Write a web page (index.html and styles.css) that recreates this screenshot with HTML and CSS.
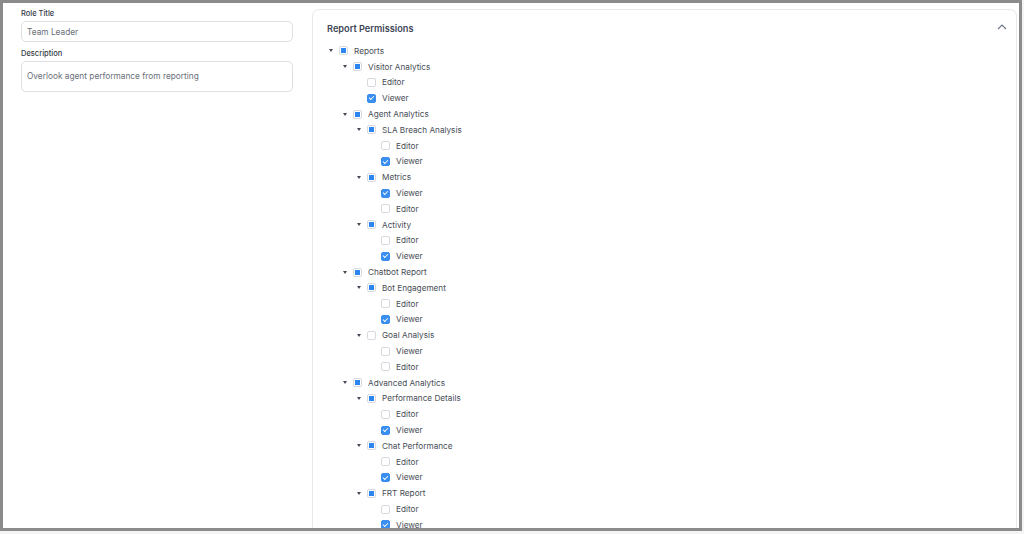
FILE: index.html
```html
<!DOCTYPE html>
<html lang="en">
<head>
    <meta charset="UTF-8">
    <title>Role Permissions</title>
    <link rel="stylesheet" href="styles.css">
</head>
<body>
    <div class="frame">
        <div class="roleForm">
            <label class="fieldLabel">Role Title</label>
            <div class="textInput">Team Leader</div>
            <label class="fieldLabel">Description</label>
            <div class="textInput textArea">Overlook agent performance from reporting</div>
        </div>

        <div class="permCard">
            <div class="permHeader">
                <span class="permTitle">Report Permissions</span>
                <svg class="chevron" width="10" height="6" viewBox="0 0 10 6"><path d="M1 5 L5 1 L9 5" fill="none" stroke="#6b7785" stroke-width="1.1"/></svg>
            </div>

            <ul class="tree">
                <li>
                    <div class="row"><span class="caret"></span><span class="box part"></span><span class="name">Reports</span></div>
                    <ul>
                        <li>
                            <div class="row"><span class="caret"></span><span class="box part"></span><span class="name">Visitor Analytics</span></div>
                            <ul>
                                <li><div class="row"><span class="slot"></span><span class="box"></span><span class="name">Editor</span></div></li>
                                <li><div class="row"><span class="slot"></span><span class="box on"></span><span class="name">Viewer</span></div></li>
                            </ul>
                        </li>
                        <li>
                            <div class="row"><span class="caret"></span><span class="box part"></span><span class="name">Agent Analytics</span></div>
                            <ul>
                                <li>
                                    <div class="row"><span class="caret"></span><span class="box part"></span><span class="name">SLA Breach Analysis</span></div>
                                    <ul>
                                        <li><div class="row"><span class="slot"></span><span class="box"></span><span class="name">Editor</span></div></li>
                                        <li><div class="row"><span class="slot"></span><span class="box on"></span><span class="name">Viewer</span></div></li>
                                    </ul>
                                </li>
                                <li>
                                    <div class="row"><span class="caret"></span><span class="box part"></span><span class="name">Metrics</span></div>
                                    <ul>
                                        <li><div class="row"><span class="slot"></span><span class="box on"></span><span class="name">Viewer</span></div></li>
                                        <li><div class="row"><span class="slot"></span><span class="box"></span><span class="name">Editor</span></div></li>
                                    </ul>
                                </li>
                                <li>
                                    <div class="row"><span class="caret"></span><span class="box part"></span><span class="name">Activity</span></div>
                                    <ul>
                                        <li><div class="row"><span class="slot"></span><span class="box"></span><span class="name">Editor</span></div></li>
                                        <li><div class="row"><span class="slot"></span><span class="box on"></span><span class="name">Viewer</span></div></li>
                                    </ul>
                                </li>
                            </ul>
                        </li>
                        <li>
                            <div class="row"><span class="caret"></span><span class="box part"></span><span class="name">Chatbot Report</span></div>
                            <ul>
                                <li>
                                    <div class="row"><span class="caret"></span><span class="box part"></span><span class="name">Bot Engagement</span></div>
                                    <ul>
                                        <li><div class="row"><span class="slot"></span><span class="box"></span><span class="name">Editor</span></div></li>
                                        <li><div class="row"><span class="slot"></span><span class="box on"></span><span class="name">Viewer</span></div></li>
                                    </ul>
                                </li>
                                <li>
                                    <div class="row"><span class="caret"></span><span class="box"></span><span class="name">Goal Analysis</span></div>
                                    <ul>
                                        <li><div class="row"><span class="slot"></span><span class="box"></span><span class="name">Viewer</span></div></li>
                                        <li><div class="row"><span class="slot"></span><span class="box"></span><span class="name">Editor</span></div></li>
                                    </ul>
                                </li>
                            </ul>
                        </li>
                        <li>
                            <div class="row"><span class="caret"></span><span class="box part"></span><span class="name">Advanced Analytics</span></div>
                            <ul>
                                <li>
                                    <div class="row"><span class="caret"></span><span class="box part"></span><span class="name">Performance Details</span></div>
                                    <ul>
                                        <li><div class="row"><span class="slot"></span><span class="box"></span><span class="name">Editor</span></div></li>
                                        <li><div class="row"><span class="slot"></span><span class="box on"></span><span class="name">Viewer</span></div></li>
                                    </ul>
                                </li>
                                <li>
                                    <div class="row"><span class="caret"></span><span class="box part"></span><span class="name">Chat Performance</span></div>
                                    <ul>
                                        <li><div class="row"><span class="slot"></span><span class="box"></span><span class="name">Editor</span></div></li>
                                        <li><div class="row"><span class="slot"></span><span class="box on"></span><span class="name">Viewer</span></div></li>
                                    </ul>
                                </li>
                                <li>
                                    <div class="row"><span class="caret"></span><span class="box part"></span><span class="name">FRT Report</span></div>
                                    <ul>
                                        <li><div class="row"><span class="slot"></span><span class="box"></span><span class="name">Editor</span></div></li>
                                        <li><div class="row"><span class="slot"></span><span class="box on"></span><span class="name">Viewer</span></div></li>
                                    </ul>
                                </li>
                            </ul>
                        </li>
                    </ul>
                </li>
            </ul>
        </div>
    </div>
</body>
</html>
```

FILE: styles.css
```css
body {
    margin: 0;
    background-color: #f4f4f4;
    font-family: Inter, "Noto Sans", sans-serif;
}

.frame {
    box-sizing: border-box;
    width: 1022px;
    height: 531px;
    border: 3px solid #8b8b8b;
    background-color: white;
    display: flex;
    gap: 19px;
    padding: 6px 0 0 18px;
    overflow: hidden;
}

.roleForm {
    width: 272px;
    flex-shrink: 0;
    display: flex;
    flex-direction: column;
}

.fieldLabel {
    font-size: 7.5px;
    font-weight: 500;
    color: #333a45;
    line-height: 10px;
    margin-bottom: 2px;
}

.textInput {
    box-sizing: border-box;
    height: 21px;
    border: 1px solid #dcdfe4;
    border-radius: 5px;
    padding: 0 5px;
    font-size: 8.3px;
    color: #6a6f78;
    display: flex;
    align-items: center;
    margin-bottom: 7px;
}

.textArea {
    height: 31px;
    padding-bottom: 1px;
}

.permCard {
    flex: 1;
    box-sizing: border-box;
    height: 540px;
    border: 1px solid #e6e8eb;
    border-radius: 7px;
    padding: 10px 9px 0 15px;
    margin-right: 2px;
}

.permHeader {
    display: flex;
    align-items: center;
    justify-content: space-between;
    height: 16px;
}

.permTitle {
    font-size: 9.2px;
    font-weight: 600;
    color: #3e4656;
    margin-left: -1px;
}

.chevron {
    margin-top: -2px;
}

.tree, .tree ul {
    list-style: none;
    margin: 0;
    padding: 0;
}

.tree {
    margin-top: 7px;
}

.tree ul {
    padding-left: 14px;
}

.row {
    display: flex;
    align-items: center;
    height: 15.8px;
}

.caret, .slot {
    width: 11px;
    flex-shrink: 0;
    display: flex;
    align-items: center;
}

.caret::before {
    content: "";
    margin-left: 1px;
    border-left: 2.5px solid transparent;
    border-right: 2.5px solid transparent;
    border-top: 3px solid #444b55;
}

.box {
    box-sizing: border-box;
    width: 9px;
    height: 9px;
    border: 1px solid #d6d9de;
    border-radius: 2px;
    background-color: white;
    flex-shrink: 0;
    display: flex;
    align-items: center;
    justify-content: center;
}

.box.part::before {
    content: "";
    width: 5px;
    height: 5px;
    background-color: #2d86f0;
}

.box.on {
    background-color: #3a8ef0;
    border-color: #3a8ef0;
}

.box.on::before {
    content: "";
    width: 3.5px;
    height: 1.8px;
    border-left: 0.9px solid white;
    border-bottom: 0.9px solid white;
    transform: rotate(-45deg);
    margin-top: -1px;
}

.name {
    margin-left: 6px;
    font-size: 8.2px;
    color: #474d56;
    white-space: nowrap;
}
```
